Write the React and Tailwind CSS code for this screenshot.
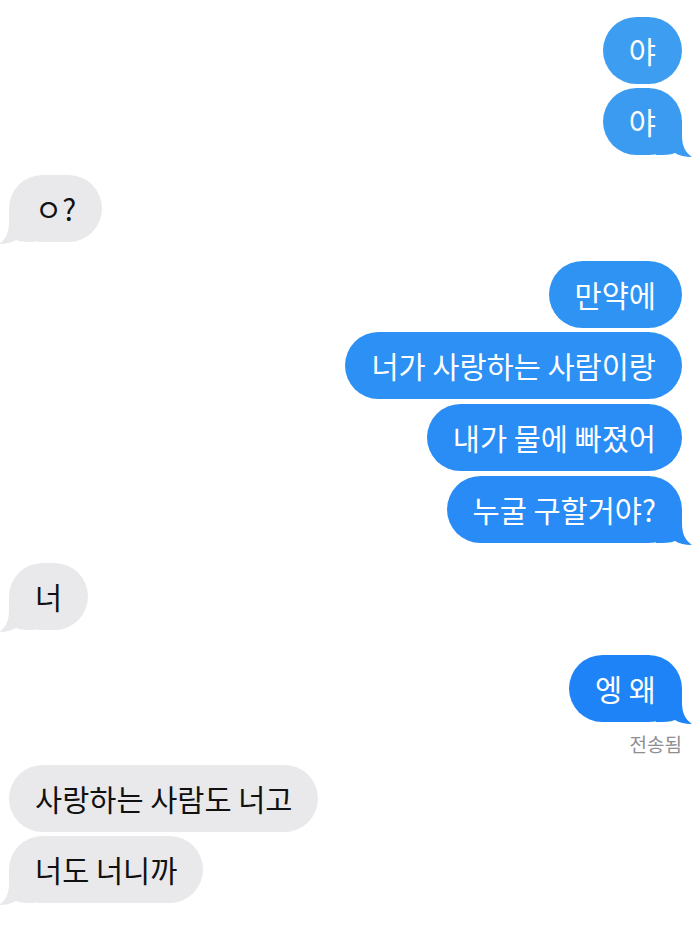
import React from 'react';

const FONT = { fontFamily: '"Noto Sans CJK KR", "Noto Sans", sans-serif' };

// message list, top to bottom
const MESSAGES = [
  { id: 1, me: true, text: '야', color: 'bg-[#3d9df1]', fill: '#3d9df1', mt: 'mt-[17px]' },
  { id: 2, me: true, text: '야', color: 'bg-[#3b9bf1]', fill: '#3b9bf1', mt: 'mt-[4px]', tail: true },
  { id: 3, me: false, text: 'ㅇ?', mt: 'mt-[20px]', tail: true },
  { id: 4, me: true, text: '만약에', color: 'bg-[#2f93f4]', fill: '#2f93f4', mt: 'mt-[19px]' },
  { id: 5, me: true, text: '너가 사랑하는 사람이랑', color: 'bg-[#2c90f5]', fill: '#2c90f5', mt: 'mt-[4px]' },
  { id: 6, me: true, text: '내가 물에 빠졌어', color: 'bg-[#2a8df6]', fill: '#2a8df6', mt: 'mt-[5px]' },
  { id: 7, me: true, text: '누굴 구할거야?', color: 'bg-[#288bf6]', fill: '#288bf6', mt: 'mt-[5px]', tail: true },
  { id: 8, me: false, text: '너', mt: 'mt-[20px]', tail: true },
  { id: 9, me: true, text: '엥 왜', color: 'bg-[#1e83f6]', fill: '#1e83f6', mt: 'mt-[25px]', tail: true, sent: true },
  { id: 10, me: false, text: '사랑하는 사람도 너고', mt: 'mt-[12px]' },
  { id: 11, me: false, text: '너도 너니까', mt: 'mt-[4px]', tail: true },
];

const Tail = ({ fill, flip }) => (
  <svg
    width="36"
    height="36"
    viewBox="0 0 36 36"
    className={`absolute bottom-[-2px] ${flip ? 'left-[-10px] -scale-x-100' : 'right-[-10px]'}`}
  >
    <path d="M0 0 H26 V14 C26 25 29 31 36 36 C29 36 23 34.5 19 32 C14 34 8 34 0 34 Z" fill={fill} />
  </svg>
);

const Bubble = ({ msg }) => {
  const mine = msg.me;
  return (
    <div className={`flex flex-col ${mine ? 'items-end' : 'items-start'} ${msg.mt}`}>
      <div
        className={`relative h-[67px] flex items-center rounded-[34px] px-[26px] text-[29.5px] leading-none ${
          mine ? `${msg.color} text-white` : 'bg-[#e9e9eb] text-[#111]'
        }`}
      >
        {msg.tail && <Tail fill={mine ? msg.fill : '#e9e9eb'} flip={!mine} />}
        <span className="relative z-10 whitespace-nowrap">{msg.text}</span>
      </div>
      {msg.sent && (
        <p className="mt-[12px] text-[19px] leading-none text-[#8e8e93]">전송됨</p>
      )}
    </div>
  );
};

export default function App() {
  return (
    <div className="w-[693px] h-[925px] bg-white overflow-hidden pl-[9px] pr-[11px]" style={FONT}>
      {MESSAGES.map((m) => (
        <Bubble key={m.id} msg={m} />
      ))}
    </div>
  );
}
